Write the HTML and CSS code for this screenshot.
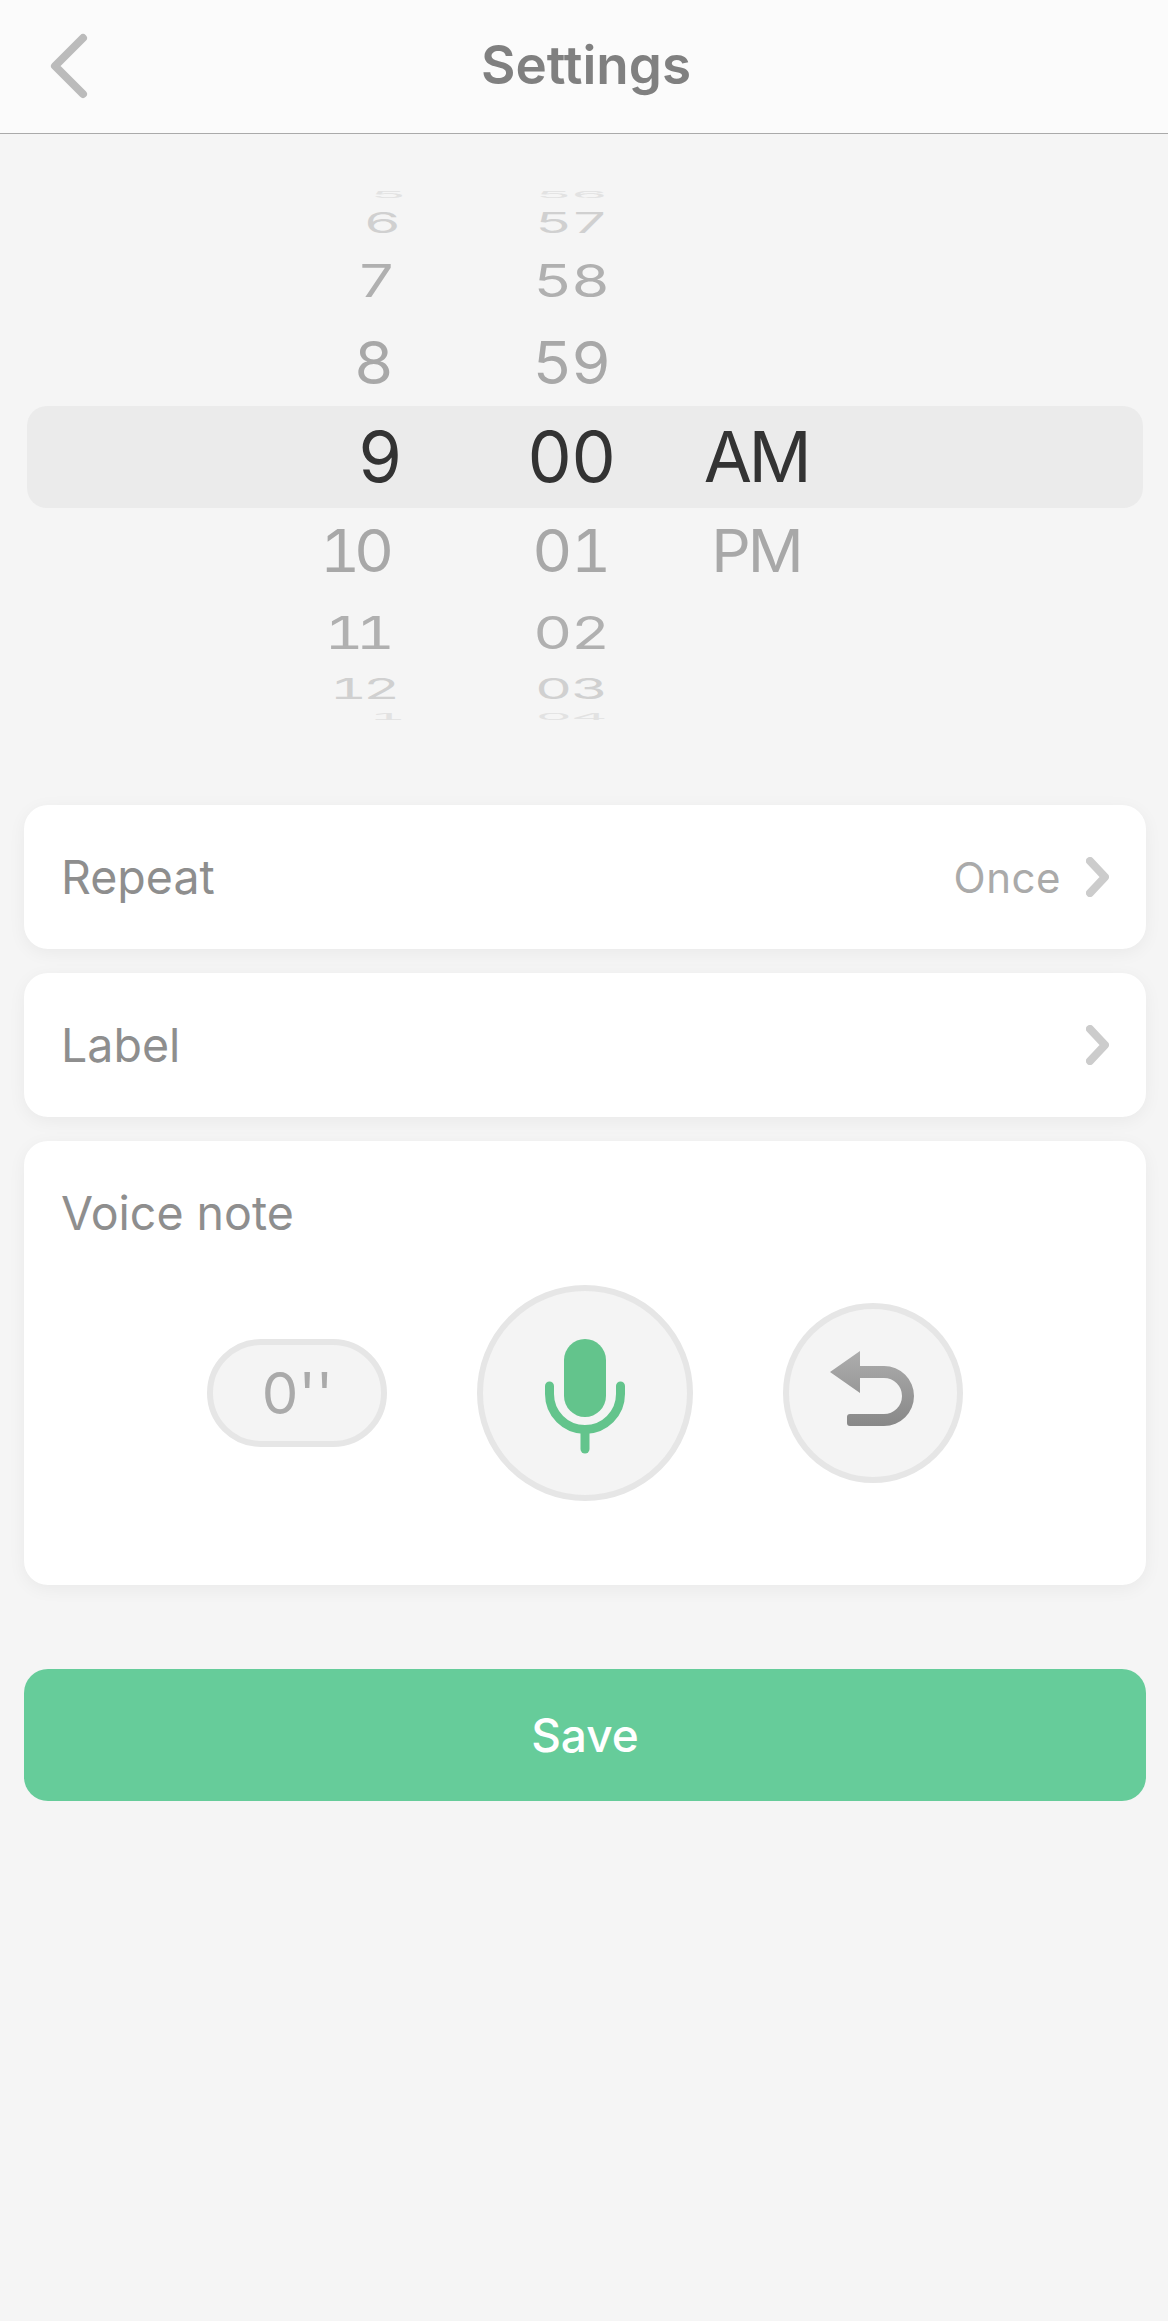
FILE: index.html
```html
<!DOCTYPE html>
<html>
    <head>
        <meta charset="utf-8" />
        <title>Settings</title>
        <link rel="stylesheet" href="styles.css">
    </head>
    <body>
        <header class="top-bar">
            <svg class="back" width="44" height="70" viewBox="0 0 44 70">
                <path d="M36 7 L8 35 L36 63" />
            </svg>
            <h1>Settings</h1>
        </header>

        <section class="picker">
            <div class="band"></div>
            <div class="wheel hours">
                <div class="row r4">5</div>
                <div class="row r3">6</div>
                <div class="row r2">7</div>
                <div class="row r1">8</div>
                <div class="row r0">9</div>
                <div class="row r1">10</div>
                <div class="row r2">11</div>
                <div class="row r3">12</div>
                <div class="row r4">1</div>
            </div>
            <div class="wheel minutes">
                <div class="row r4">56</div>
                <div class="row r3">57</div>
                <div class="row r2">58</div>
                <div class="row r1">59</div>
                <div class="row r0">00</div>
                <div class="row r1">01</div>
                <div class="row r2">02</div>
                <div class="row r3">03</div>
                <div class="row r4">04</div>
            </div>
            <div class="wheel ampm">
                <div class="row r0">AM</div>
                <div class="row r1">PM</div>
            </div>
        </section>

        <div class="card line">
            <span class="name">Repeat</span>
            <span class="value">Once</span>
            <svg class="arrow" width="23" height="40" viewBox="0 0 23 40">
                <path d="M4 4 L19 20 L4 36" />
            </svg>
        </div>
        <div class="card line">
            <span class="name">Label</span>
            <svg class="arrow" width="23" height="40" viewBox="0 0 23 40">
                <path d="M4 4 L19 20 L4 36" />
            </svg>
        </div>

        <div class="card voice">
            <span class="name">Voice note</span>
            <div class="controls">
                <div class="pill">0''</div>
                <div class="round mic">
                    <svg width="80" height="124" viewBox="0 -8 80 124">
                        <rect x="19" y="0" width="42" height="78" rx="21" fill="#63c48c" />
                        <path d="M4.5 47 V55 A35.5 35.5 0 0 0 75.5 55 V47" fill="none" stroke="#63c48c" stroke-width="9" stroke-linecap="round" />
                        <path d="M40 92 V110" fill="none" stroke="#63c48c" stroke-width="9" stroke-linecap="round" />
                    </svg>
                </div>
                <div class="round undo">
                    <svg class="undo-icon" width="86" height="76" viewBox="0 0 86 76">
                        <defs>
                            <linearGradient id="undoFill" x1="0" y1="0" x2="0" y2="1">
                                <stop offset="0" stop-color="#adadad" />
                                <stop offset="1" stop-color="#888888" />
                            </linearGradient>
                        </defs>
                        <path fill="url(#undoFill)" d="M30 0 V15 H54 A30 30 0 0 1 54 75 H20 A3 3 0 0 1 17 72 V66 A3 3 0 0 1 20 63 H54 A18 18 0 0 0 54 27 H30 V42 L0 21 Z" />
                    </svg>
                </div>
            </div>
        </div>

        <button class="save">Save</button>
    </body>
</html>
```

FILE: styles.css
```css
body {
    margin: 0;
    min-height: 2321px;
    background-color: #f5f5f5;
    font-family: Inter, "Noto Sans", sans-serif;
    overflow-x: hidden;
}

.top-bar {
    position: relative;
    height: 133px;
    background-color: #fbfbfb;
    border-bottom: 1px solid #aaaaaa;
    display: flex;
    align-items: center;
    justify-content: center;
}

.top-bar h1 {
    margin: 0 0 3px 4px;
    font-size: 53px;
    font-weight: 600;
    color: #808080;
}

.back {
    position: absolute;
    left: 47px;
    top: 31px;
}

.back path {
    fill: none;
    stroke: #bbbbbb;
    stroke-width: 8;
    stroke-linecap: round;
    stroke-linejoin: round;
}

/* time wheel */
.picker {
    position: relative;
    height: 534px;
    margin: 55px 0 82px;
    display: flex;
    padding-left: 300px;
}

.band {
    position: absolute;
    left: 27px;
    top: 217px;
    width: 1116px;
    height: 102px;
    background-color: #ebebeb;
    border-radius: 20px;
}

.wheel {
    position: relative;
    font-size: 70px;
    font-variant-numeric: tabular-nums;
}

.hours {
    width: 103px;
    text-align: right;
}

.minutes {
    width: 120px;
    margin-left: 108px;
    text-align: center;
    letter-spacing: -1.5px;
}

.ampm {
    width: 110px;
    margin-left: 70px;
    margin-top: 220px;
    text-align: center;
    letter-spacing: -3.5px;
}

.row {
    display: flex;
    align-items: center;
    white-space: nowrap;
}

.hours .row {
    justify-content: flex-end;
    transform-origin: right center;
}

.minutes .row,
.ampm .row {
    justify-content: center;
}

.r0 { height: 94px; color: #333333; }
.r1 { height: 94px; color: #a8a8a8; transform: scale(0.885, 0.84); }
.r2 { height: 70px; color: #b0b0b0; transform: scale(0.86, 0.635); }
.r3 { height: 44px; color: #d0d0d0; transform: scale(0.82, 0.4); }
.r4 { height: 12px; color: #e2e2e2; transform: scale(0.81, 0.12); }

.hours .row:nth-child(1) { transform: translateX(4px) scale(0.81, 0.12); }
.hours .row:nth-child(2) { transform: translateX(-2px) scale(0.82, 0.4); }
.hours .row:nth-child(3) { transform: translateX(-7px) scale(0.86, 0.635); }
.hours .row:nth-child(4) { transform: translateX(-9px) scale(0.885, 0.84); }
.hours .row:nth-child(6) { letter-spacing: -7px; transform: translateX(-15px) scale(0.885, 0.84); }
.hours .row:nth-child(7) { letter-spacing: -9px; transform: translateX(-16px) scale(0.86, 0.635); }
.hours .row:nth-child(8) { letter-spacing: -5px; transform: translateX(-7px) scale(0.82, 0.4); }
.hours .row:nth-child(9) { transform: translateX(3px) scale(0.81, 0.12); }

/* cards */
.card {
    margin: 0 22px 24px 24px;
    background-color: #ffffff;
    border-radius: 24px;
    box-shadow: 0 4px 18px rgba(0, 0, 0, 0.05);
    padding: 0 37px;
}

.line {
    height: 144px;
    display: flex;
    align-items: center;
}

.name {
    font-size: 46.5px;
    color: #8e8e8e;
}

.value {
    margin-left: auto;
    font-size: 42px;
    color: #aaaaaa;
    letter-spacing: 0.5px;
}

.arrow {
    margin-left: 25px;
    flex: none;
}

.line .name + .arrow {
    margin-left: auto;
}

.arrow path {
    fill: none;
    stroke: #cccccc;
    stroke-width: 8;
    stroke-linecap: round;
    stroke-linejoin: round;
}

.voice {
    height: 444px;
    padding-top: 44px;
    box-sizing: border-box;
    margin-bottom: 84px;
}

.controls {
    display: flex;
    align-items: center;
    justify-content: center;
    gap: 90px;
    margin-top: 44px;
    margin-left: -1px;
}

.pill {
    width: 180px;
    height: 108px;
    box-sizing: border-box;
    border: 6px solid #e6e6e6;
    border-radius: 54px;
    background-color: #f4f4f4;
    color: #aaaaaa;
    font-size: 58px;
    padding-left: 2px;
    display: flex;
    align-items: center;
    justify-content: center;
}

.round {
    box-sizing: border-box;
    border: 6px solid #e6e6e6;
    border-radius: 50%;
    background-color: #f4f4f4;
    display: flex;
    align-items: center;
    justify-content: center;
}

.mic {
    width: 216px;
    height: 216px;
}

.undo {
    width: 180px;
    height: 180px;
}

.undo-icon {
    margin-bottom: 9px;
}

.save {
    display: block;
    width: 1122px;
    height: 132px;
    margin-left: 24px;
    border: none;
    border-radius: 24px;
    background-color: #66cc9a;
    color: #ffffff;
    font-family: Inter, "Noto Sans", sans-serif;
    font-size: 46px;
    font-weight: 500;
}
```
